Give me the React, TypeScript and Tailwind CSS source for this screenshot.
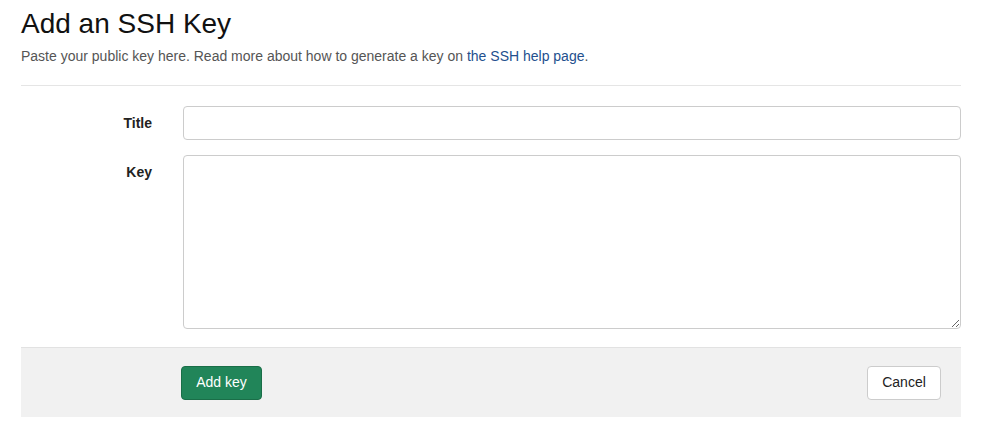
export default function App() {
  return (
    <div className="min-h-[447px] bg-white px-[21px] pt-[7px] text-[#333]" style={{ fontFamily: '"Liberation Sans", Arial, sans-serif' }}>
      {/* Header */}
      <h3 className="text-[28px] leading-[34px] font-normal text-[#111]">Add an SSH Key</h3>
      <p className="mt-[6px] text-[14px] leading-[18px] text-[#555]">
        Paste your public key here. Read more about how to generate a key on{" "}
        <a href="#" className="text-[#23508e]">the SSH help page</a>.
      </p>
      <hr className="mt-[20px] w-[940px] border-t border-[#e5e5e5]" />

      {/* Form */}
      <form className="w-[940px]">
        <div className="mt-[20px] flex items-center">
          <label className="w-[132px] pr-[1px] text-right text-[14px] font-bold text-[#222]">Title</label>
          <input className="ml-[30px] h-[34px] flex-1 rounded-[4px] border border-[#ccc] px-3 text-[14px] outline-none" />
        </div>
        <div className="mt-[15px] flex items-start">
          <label className="w-[132px] pr-[1px] pt-[7px] text-right text-[14px] font-bold text-[#222]">Key</label>
          <textarea className="ml-[30px] h-[174px] flex-1 rounded-[4px] border border-[#ccc] px-3 py-2 text-[14px] outline-none" />
        </div>

        {/* Actions */}
        <div className="mt-[18px] flex h-[70px] items-center justify-between border-t border-[#e2e2e2] bg-[#f1f1f1] pl-[160px] pr-[20px]">
          <button type="button" className="h-[34px] w-[81px] rounded-[4px] border border-[#1a6e48] bg-[#218559] text-[14px] text-white">
            Add key
          </button>
          <button type="button" className="h-[34px] w-[74px] rounded-[4px] border border-[#ccc] bg-white text-[14px] text-[#222]">
            Cancel
          </button>
        </div>
      </form>
    </div>
  );
}
